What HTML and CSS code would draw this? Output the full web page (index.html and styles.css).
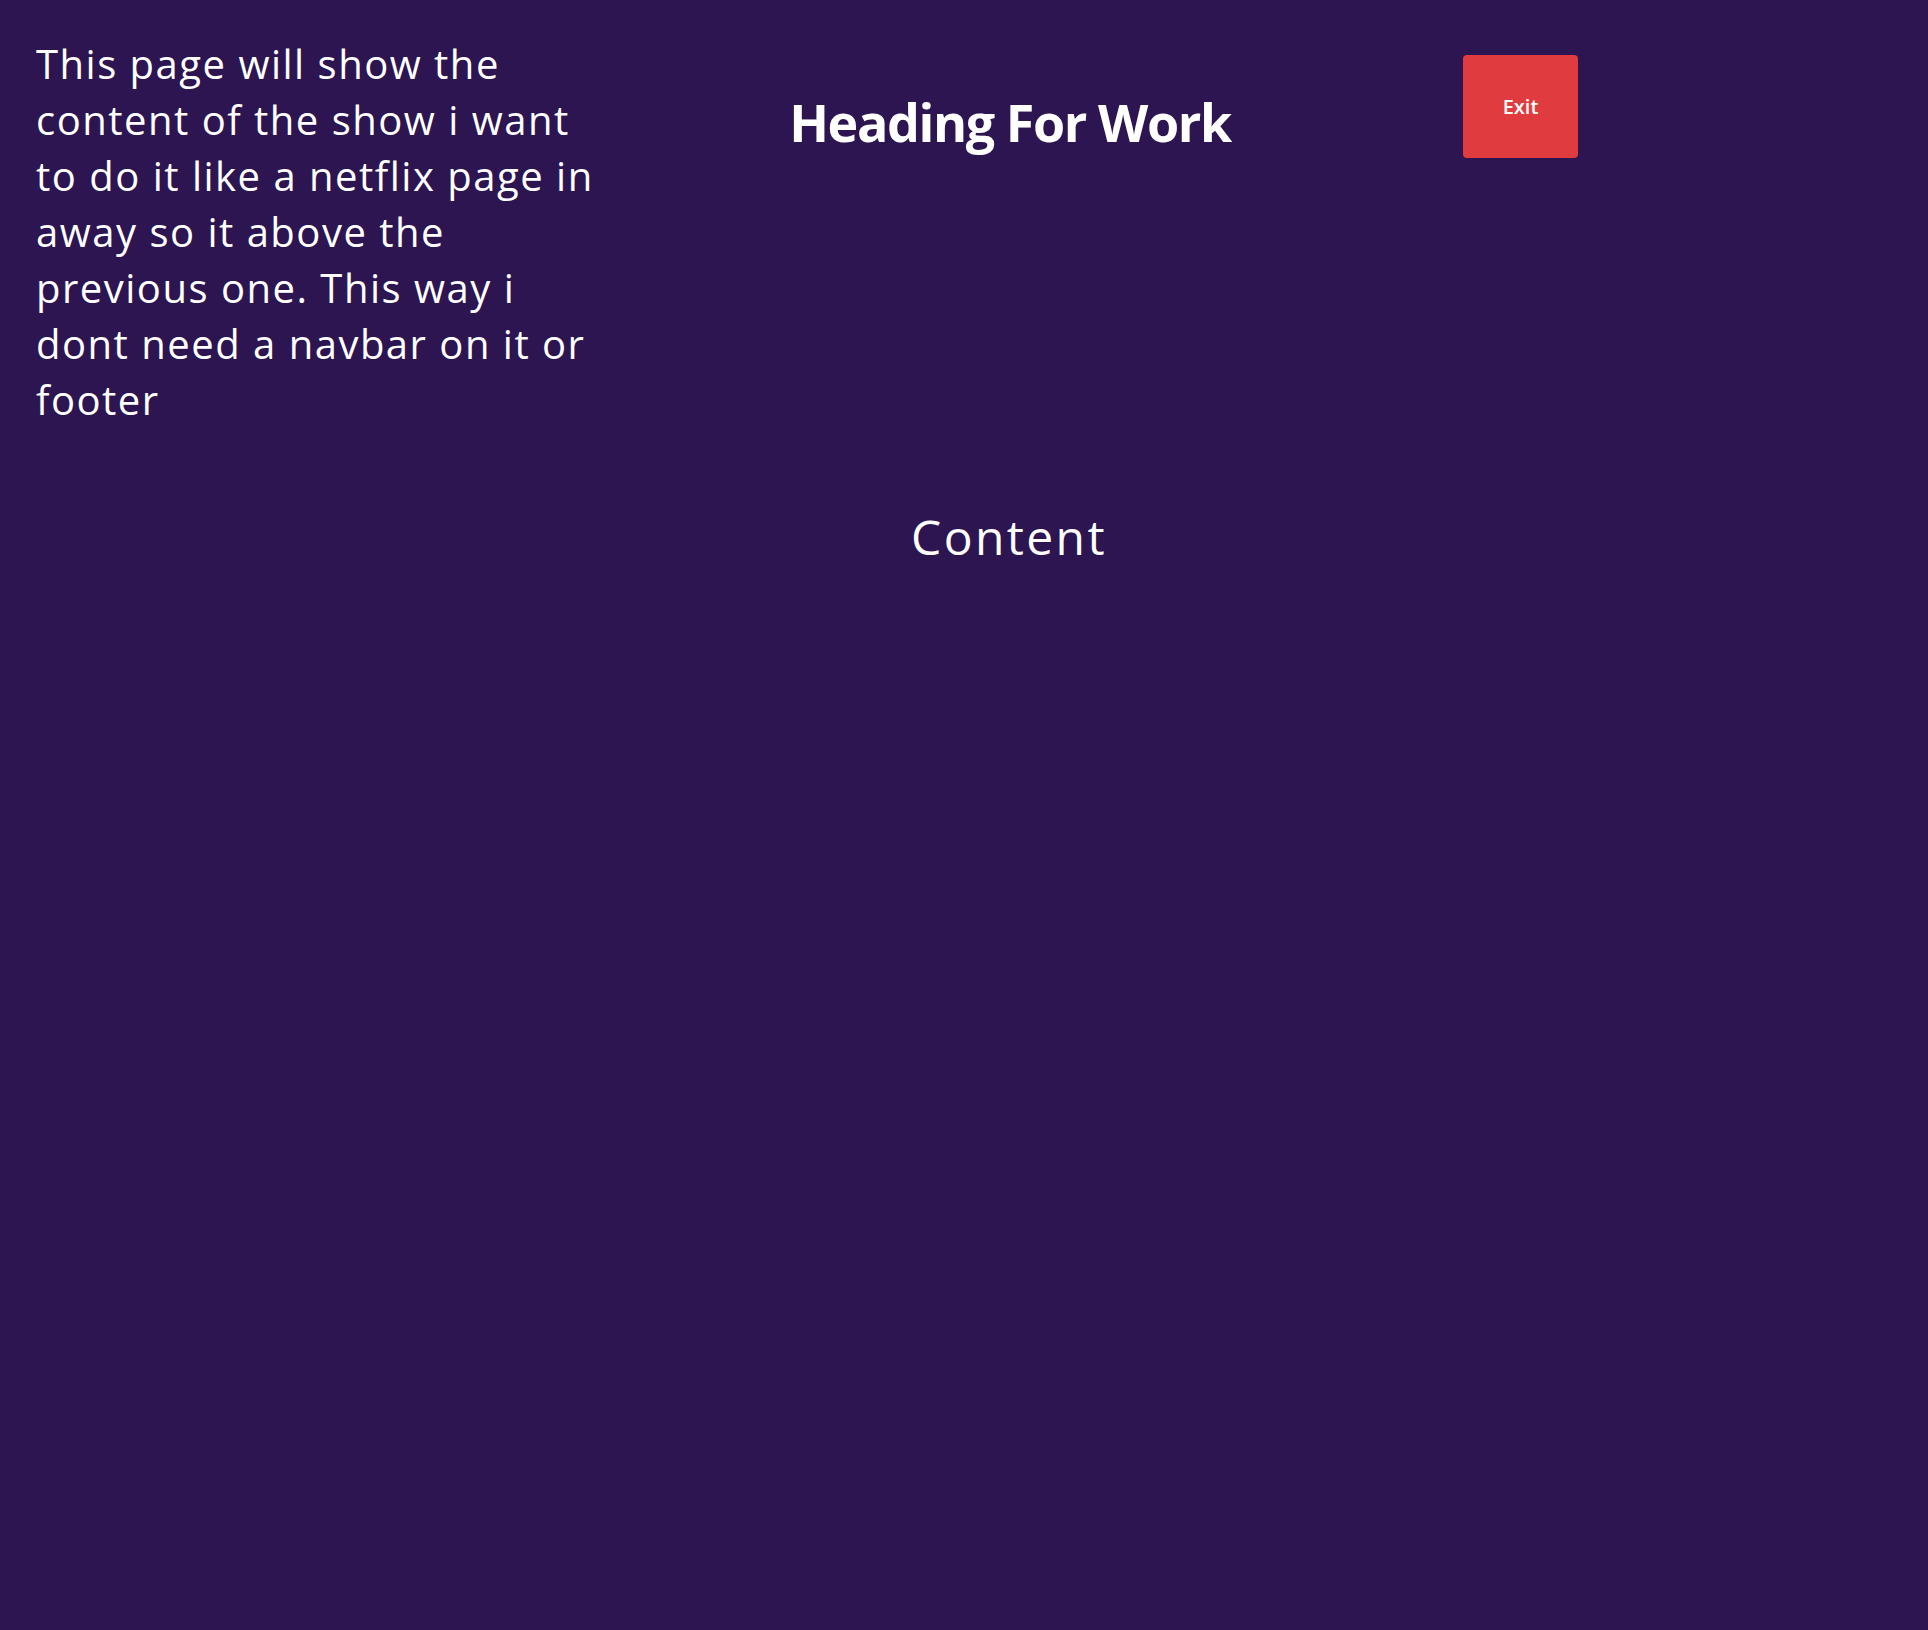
FILE: index.html
```html
<!DOCTYPE html>
<html lang="en">
<head>
<meta charset="utf-8">
<title>Heading For Work</title>
<link rel="stylesheet" href="styles.css">
</head>
<body>
<header class="top">
  <p class="intro">This page will show the content of the show i want to do it like a netflix page in away so it above the previous one. This way i dont need a navbar on it or footer</p>
  <h1 class="title">Heading For Work</h1>
  <button class="exit" type="button">Exit</button>
</header>
<main class="main">
  <h2 class="content">Content</h2>
</main>
</body>
</html>
```
FILE: styles.css
```css
html, body {
  margin: 0;
  padding: 0;
}
body {
  background: #2c1550;
  color: #ffffff;
  font-family: "Open Sans", "Noto Sans", sans-serif;
  min-height: 1630px;
}
.top {
  display: grid;
  grid-template-columns: 564px 820px 115px;
  column-gap: 0;
  padding: 36px 0 0 36px;
  align-items: start;
}
.intro {
  margin: 0;
  font-size: 40px;
  line-height: 56px;
  font-weight: 400;
  letter-spacing: 1.5px;
  width: 560px;
}
.title {
  margin: 55px 0 0 0;
  font-size: 52px;
  line-height: 1.2;
  font-weight: 700;
  letter-spacing: -1.4px;
  text-align: center;
}
.exit {
  margin: 19px 0 0 43px;
  width: 115px;
  height: 103px;
  border: 0;
  border-radius: 4px;
  background: #e03c40;
  color: #ffffff;
  font-family: "Open Sans", "Noto Sans", sans-serif;
  font-size: 20px;
  font-weight: 600;
}
.main {
  display: flex;
  justify-content: center;
  padding: 0 0 0 90px;
}
.content {
  margin: 80px 0 0 0;
  font-size: 48px;
  line-height: 1.2;
  font-weight: 400;
  letter-spacing: 2.4px;
}
```
